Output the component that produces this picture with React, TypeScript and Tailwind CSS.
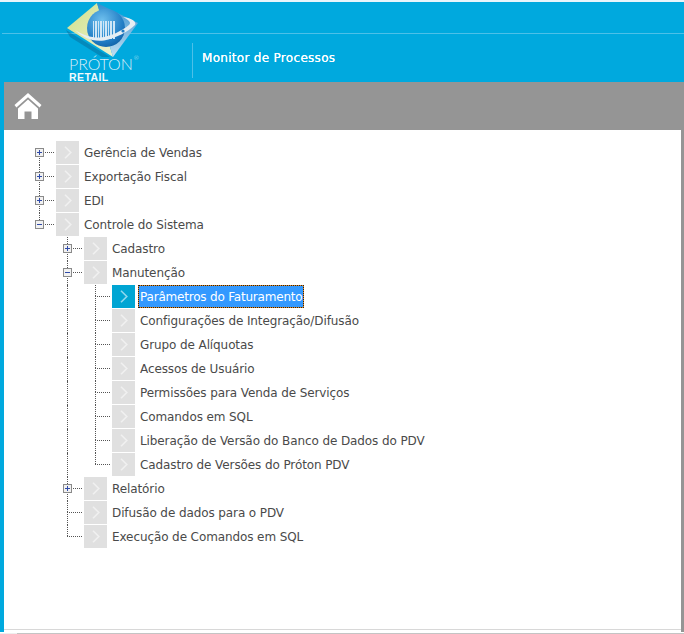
import React from "react";

function Logo() {
  return (
    <div className="absolute left-[62px] top-0 w-[82px] h-[80px] flex flex-col">
      <svg width="82" height="56" viewBox="0 0 82 56" className="shrink-0 -mb-[2px]">
        <defs>
          <radialGradient id="g" cx="0.4" cy="0.3" r="0.8">
            <stop offset="0" stopColor="#6fc0ee" />
            <stop offset="0.7" stopColor="#1f7cc4" />
            <stop offset="1" stopColor="#0f5a9e" />
          </radialGradient>
          <linearGradient id="l" x1="0" y1="0" x2="1" y2="1">
            <stop offset="0" stopColor="#cfe08a" />
            <stop offset="1" stopColor="#eef2d0" />
          </linearGradient>
          <linearGradient id="r" x1="0" y1="0" x2="0" y2="1">
            <stop offset="0" stopColor="#2f8ed0" />
            <stop offset="1" stopColor="#c4dff2" />
          </linearGradient>
        </defs>
        <polygon points="4,28 48,55 40,55 8,35" fill="#0a5c88" opacity="0.4" />
        <polygon points="35,1 5,26 51,55" fill="url(#l)" />
        <polygon points="35,1 76,21 51,55" fill="url(#r)" />
        <circle cx="44" cy="26" r="19" fill="url(#g)" />
        <g fill="#cfe6f6">
          <rect x="31" y="19" width="1" height="18" />
          <rect x="33" y="19" width="2" height="18" />
          <rect x="36" y="19" width="1" height="18" />
          <rect x="38" y="19" width="2" height="18" />
          <rect x="41" y="19" width="1" height="18" />
          <rect x="43" y="19" width="2" height="18" />
          <rect x="46" y="19" width="1" height="18" />
          <rect x="48" y="19" width="2" height="18" />
          <rect x="51" y="19" width="2" height="18" />
        </g>
        <path d="M13 28 C20 35 30 40 42 38.5 C54 36 66 30 73 23 C75 20 70 16 61 15 C66 18 70 20 67 23 C60 29 48 34.5 38 35.5 C30 36 21 33 13 28 Z" fill="#e6eef3" />
        <circle cx="61" cy="29" r="1.6" fill="#1f7cc4" />
      </svg>
      <div className="relative ml-[7px] w-fit text-[#dbeef8] text-[16px] leading-[15px] font-['Lato',sans-serif] font-light">
        PRÓTON
        <span className="absolute -right-[6px] -top-[2px] text-[6px] leading-[8px]">®</span>
      </div>
      <div className="ml-[7px] mt-[2px] text-[#f2f9fc] text-[10.5px] leading-[9px] font-bold font-['Liberation_Sans',sans-serif] tracking-[0.4px]">
        RETAIL
      </div>
    </div>
  );
}

function Home() {
  return (
    <svg width="28" height="28" viewBox="0 0 28 28" fill="#ffffff">
      <path d="M14 1 L27.5 13 L25.6 15.4 L14 5.2 L2.4 15.4 L0.5 13 Z" />
      <path d="M14 7.6 L24 16.4 V27 H17.5 V19.5 H10.5 V27 H4 V16.4 Z" />
    </svg>
  );
}

type Item = {
  label: string;
  level: number;
  toggle?: "+" | "-";
  first?: boolean;
  last?: boolean;
  guides?: boolean[];
  selected?: boolean;
};

const items: Item[] = [
  { label: "Gerência de Vendas", level: 0, toggle: "+", first: true, guides: [] },
  { label: "Exportação Fiscal", level: 0, toggle: "+", guides: [] },
  { label: "EDI", level: 0, toggle: "+", guides: [] },
  { label: "Controle do Sistema", level: 0, toggle: "-", last: true, guides: [] },
  { label: "Cadastro", level: 1, toggle: "+", guides: [false] },
  { label: "Manutenção", level: 1, toggle: "-", guides: [false] },
  { label: "Parâmetros do Faturamento", level: 2, guides: [false, true], selected: true },
  { label: "Configurações de Integração/Difusão", level: 2, guides: [false, true] },
  { label: "Grupo de Alíquotas", level: 2, guides: [false, true] },
  { label: "Acessos de Usuário", level: 2, guides: [false, true] },
  { label: "Permissões para Venda de Serviços", level: 2, guides: [false, true] },
  { label: "Comandos em SQL", level: 2, guides: [false, true] },
  { label: "Liberação de Versão do Banco de Dados do PDV", level: 2, guides: [false, true] },
  { label: "Cadastro de Versões do Próton PDV", level: 2, guides: [false, true], last: true },
  { label: "Relatório", level: 1, toggle: "+", guides: [false] },
  { label: "Difusão de dados para o PDV", level: 1, guides: [false] },
  { label: "Execução de Comandos em SQL", level: 1, guides: [false], last: true },
];

function Toggle({ kind }: { kind: "+" | "-" }) {
  return (
    <svg width="9" height="9" viewBox="0 0 9 9" className="absolute left-[3px] top-[7px]">
      <rect x="0.5" y="0.5" width="8" height="8" fill="#f1f1f1" stroke="#8a8a8a" />
      <rect x="2" y="4" width="5" height="1" fill="#2f4aa8" />
      {kind === "+" && <rect x="4" y="2" width="1" height="5" fill="#2f4aa8" />}
    </svg>
  );
}

function Row({ item }: { item: Item }) {
  return (
    <div className="flex h-6">
      {item.guides!.map((on, i) => (
        <div key={i} className="w-7 h-6 shrink-0 pl-[7px]">
          {on && <div className="h-6 w-0 border-l border-dotted border-[#555]" />}
        </div>
      ))}
      <div className="relative w-6 h-6 shrink-0">
        {!(item.first && item.level === 0) && (
          <div className="absolute left-[7px] top-0 h-[11px] w-0 border-l border-dotted border-[#555]" />
        )}
        {!item.last && <div className="absolute left-[7px] top-[11px] h-[13px] w-0 border-l border-dotted border-[#555]" />}
        <div className="absolute left-[7px] top-[11px] w-[15px] h-0 border-t border-dotted border-[#555]" />
        {item.toggle && <Toggle kind={item.toggle} />}
      </div>
      <div className={`w-[23px] h-[23px] shrink-0 flex items-center justify-center ${item.selected ? "bg-[#00a5d3]" : "bg-[#e0e0e0]"}`}>
        <svg width="8" height="13" viewBox="0 0 8 13" fill="none" stroke={item.selected ? "#8fd8ee" : "#f0f0f0"} strokeWidth="1.6">
          <path d="M1 0.8 L6.8 6.5 L1 12.2" />
        </svg>
      </div>
      {item.selected ? (
        <div className="ml-[3px] h-[23px] flex border border-dotted border-[#222] bg-[#e88a1e] leading-none tracking-[-0.2px]">
          <div className="px-px flex items-center bg-[#3399ff] text-white">{item.label}</div>
        </div>
      ) : (
        <div className="ml-[5px] h-[23px] flex items-center text-[#4a4a4a] leading-none">{item.label}</div>
      )}
    </div>
  );
}

export default function App() {
  return (
    <div className="w-[684px] h-[634px] bg-white overflow-hidden flex flex-col font-['DejaVu_Sans',sans-serif] text-[12px] tracking-[-0.1px]">
      <div className="h-[2px] bg-[#e8f5fb] shrink-0" />
      <header className="relative h-[80px] bg-[#00a9de] shrink-0">
        <div className="h-[32px] ml-[2px] border-b border-[#4dc0e8]" />
        <div className="flex items-start pl-[192px] pt-[9px]">
          <div className="w-px h-[35px] bg-[#4dc0e8]" />
          <div className="ml-[9px] mt-[7px] text-white leading-[16px] tracking-[0.3px] [text-shadow:0_0_0.6px_#ffffff]">Monitor de Processos</div>
        </div>
        <Logo />
      </header>
      <div className="flex-1 flex min-h-0">
        <div className="w-[4px] h-[550px] bg-[#00a9de] shrink-0" />
        <main className="flex-1 flex flex-col min-w-0">
          <div className="h-[48px] bg-[#959595] shrink-0 flex items-center pl-[10px]">
            <Home />
          </div>
          <div className="flex-1 flex min-h-0">
            <div className="flex-1 flex flex-col min-w-0">
              <div className="h-[499px] pl-[28px] pt-[11px] shrink-0">
                {items.map((it) => (
                  <Row key={it.label} item={it} />
                ))}
              </div>
              <div className="h-px shrink-0 bg-[#d8d8d8]" />
            </div>
            <div className="w-[3px] h-[502px] bg-[#959595] shrink-0" />
          </div>
        </main>
      </div>
      <div className="h-px shrink-0 flex">
        <div className="w-[17px] bg-[#eeeeee]" />
        <div className="flex-1 bg-[#c4c4c4]" />
      </div>
    </div>
  );
}
